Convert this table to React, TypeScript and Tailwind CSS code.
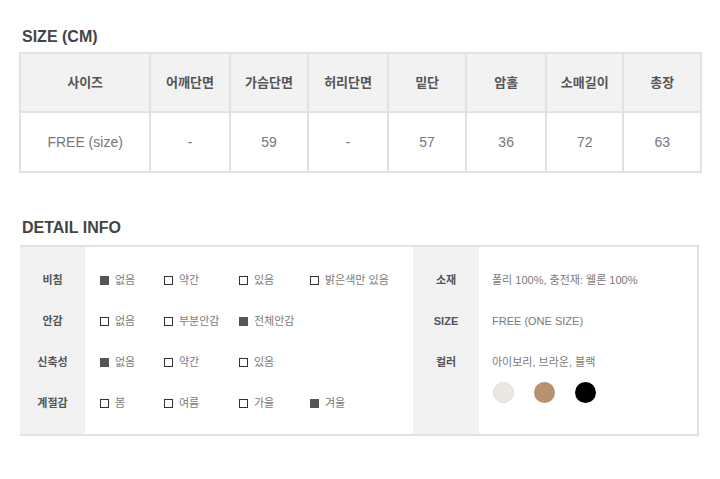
import React from "react";

const font = { fontFamily: '"Liberation Sans", "Noto Sans CJK KR", sans-serif' };

const headers = ["사이즈", "어깨단면", "가슴단면", "허리단면", "밑단", "암홀", "소매길이", "총장"];
const values = ["FREE (size)", "-", "59", "-", "57", "36", "72", "63"];
const widths = ["w-[129px]", "w-[80px]", "w-[79px]", "w-[80px]", "w-[79px]", "w-[80px]", "w-[78px]", "w-[78px]"];

type Opt = { t: string; on: boolean };
const rows: { label: string; opts: Opt[] }[] = [
  { label: "비침", opts: [{ t: "없음", on: true }, { t: "약간", on: false }, { t: "있음", on: false }, { t: "밝은색만 있음", on: false }] },
  { label: "안감", opts: [{ t: "없음", on: false }, { t: "부분안감", on: false }, { t: "전체안감", on: true }] },
  { label: "신축성", opts: [{ t: "없음", on: true }, { t: "약간", on: false }, { t: "있음", on: false }] },
  { label: "계절감", opts: [{ t: "봄", on: false }, { t: "여름", on: false }, { t: "가을", on: false }, { t: "겨울", on: true }] },
];

function Box({ on }: { on: boolean }) {
  return on ? (
    <span className="inline-block w-[9px] h-[9px] bg-[#555]" />
  ) : (
    <span className="inline-block w-[9px] h-[9px] border-[1.5px] border-[#333] bg-white" />
  );
}

export default function App() {
  return (
    <div className="w-[720px] h-[479px] bg-white" style={font}>
      <div className="pl-[22px] pt-[27px] text-[16px] font-bold text-[#444] leading-[20px]">SIZE (CM)</div>
      <div className="ml-[19px] mt-[5px] flex w-[683px] border-2 border-[#e2e2e2]">
        {headers.map((h, i) => (
          <div key={i} className={`${widths[i]} flex flex-col ${i > 0 ? "border-l-2 border-[#e2e2e2]" : ""}`}>
            <div className="h-[59px] flex items-center justify-center bg-[#f2f2f2] text-[13px] font-bold text-[#555] border-b-2 border-[#e2e2e2]">{h}</div>
            <div className="h-[58px] flex items-center justify-center text-[14px] text-[#777]">{values[i]}</div>
          </div>
        ))}
      </div>

      <div className="pl-[22px] mt-[45px] text-[16px] font-bold text-[#444] leading-[20px]">DETAIL INFO</div>
      <div className="ml-[20px] mt-[7px] w-[679px] h-[191px] flex border-t-2 border-b-2 border-r-2 border-[#e2e2e2]">
        <div className="w-[65px] bg-[#f2f2f2] pt-[13px]">
          {rows.map((r) => (
            <div key={r.label} className="h-[41px] flex items-center justify-center text-[11px] font-bold text-[#555]">{r.label}</div>
          ))}
        </div>
        <div className="w-[328px] pt-[13px] pl-[15px]">
          {rows.map((r) => (
            <div key={r.label} className="h-[41px] grid grid-cols-[64px_75px_71px_auto] items-center">
              {r.opts.map((o) => (
                <div key={o.t} className="flex items-center gap-[6px] text-[11px] text-[#7a7a7a]">
                  <Box on={o.on} />
                  <span>{o.t}</span>
                </div>
              ))}
            </div>
          ))}
        </div>
        <div className="w-[66px] bg-[#f2f2f2] pt-[13px]">
          {["소재", "SIZE", "컬러"].map((l) => (
            <div key={l} className="h-[41px] flex items-center justify-center text-[11px] font-bold text-[#555]">{l}</div>
          ))}
        </div>
        <div className="flex-1 pt-[13px] pl-[13px]">
          <div className="h-[41px] flex items-center text-[11px] text-[#7a7a7a]">폴리 100%, 충전재: 웰론 100%</div>
          <div className="h-[41px] flex items-center text-[11px] text-[#7a7a7a]">FREE (ONE SIZE)</div>
          <div className="h-[41px] flex items-center text-[11px] text-[#7a7a7a]">아이보리, 브라운, 블랙</div>
          <div className="flex gap-[20px] pl-[1px] -mt-[1px]">
            <span className="w-[21px] h-[21px] rounded-full bg-[#ebe8e2] border border-[#ddd]" />
            <span className="w-[21px] h-[21px] rounded-full bg-[#b8926f]" />
            <span className="w-[21px] h-[21px] rounded-full bg-black" />
          </div>
        </div>
      </div>
    </div>
  );
}
